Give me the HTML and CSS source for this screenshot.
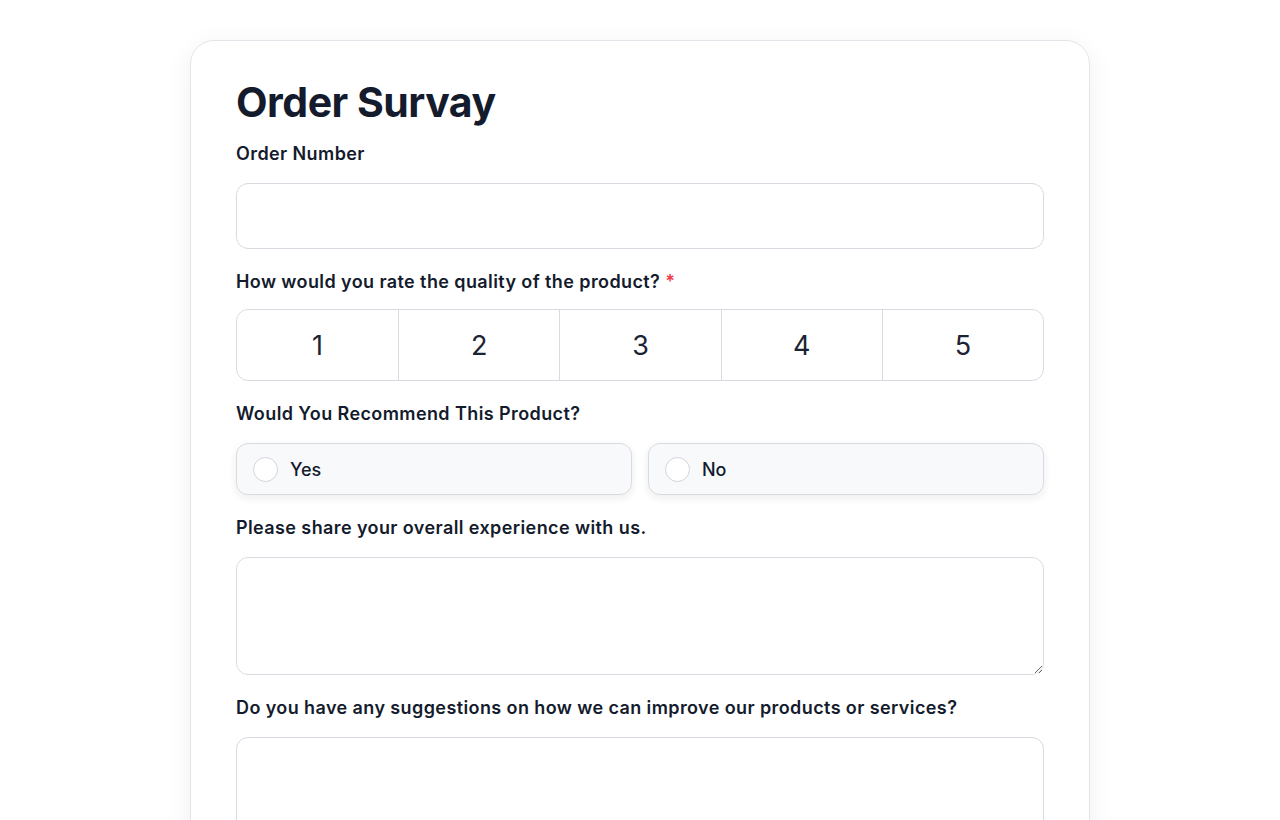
FILE: index.html
```html
<!DOCTYPE html>
<html>
  <head>
    <meta charset='UTF-8'>
    <meta name='viewport' content='width=device-width, initial-scale=1.0'>
    <title>Order Survay</title>
    <link rel="stylesheet" href="styles.css">
  </head>
  <body>
    <div class='page'>
      <form class='survey'>
        <h1 class='survey__title'>Order Survay</h1>

        <div class='field'>
          <label class='field__label' for='order-number'>Order Number</label>
          <input class='field__input' id='order-number' type='text'>
        </div>

        <div class='field'>
          <div class='field__label field__label--rating'>How would you rate the quality of the product? <span class='required'>*</span></div>
          <div class='rating'>
            <div class='rating__cell'>1</div>
            <div class='rating__cell'>2</div>
            <div class='rating__cell'>3</div>
            <div class='rating__cell'>4</div>
            <div class='rating__cell'>5</div>
          </div>
        </div>

        <div class='field'>
          <div class='field__label'>Would You Recommend This Product?</div>
          <div class='choices'>
            <label class='choice'>
              <span class='choice__radio'></span>
              <span class='choice__text'>Yes</span>
            </label>
            <label class='choice'>
              <span class='choice__radio'></span>
              <span class='choice__text'>No</span>
            </label>
          </div>
        </div>

        <div class='field'>
          <label class='field__label' for='experience'>Please share your overall experience with us.</label>
          <textarea class='field__textarea' id='experience'></textarea>
        </div>

        <div class='field'>
          <label class='field__label' for='suggestions'>Do you have any suggestions on how we can improve our products or services?</label>
          <textarea class='field__textarea' id='suggestions'></textarea>
        </div>
      </form>
    </div>
  </body>
</html>
```

FILE: styles.css
```css
html,
body {
	margin: 0;
}

body {
	background: #fff;
	font-family: Inter, 'Noto Sans', Arial, sans-serif;
	color: #141b2d;
}

.page {
	display: flex;
	justify-content: center;
	padding-top: 40px;
}

.survey {
	box-sizing: border-box;
	width: 900px;
	padding: 36px 45px 40px;
	background: #fff;
	border: 1px solid #e4e5ea;
	border-radius: 24px;
	box-shadow: 0 6px 28px rgba(20, 27, 45, 0.06);
}

  .survey__title {
  	margin: 0 0 14px;
  	font-size: 41px;
  	line-height: 50px;
  	font-weight: 700;
  	letter-spacing: -0.5px;
  }

  .field {
  	display: flex;
  	flex-direction: column;
  	margin-bottom: 20px;
  }

    .field__label {
    	display: block;
    	margin-bottom: 16px;
    	font-size: 18px;
    	line-height: 26px;
    	font-weight: 600;
    	letter-spacing: 0.4px;
    }

    .field__label--rating {
    	margin-bottom: 14px;
    }

    .required {
    	color: #ef3b4a;
    }

    .field__input,
    .field__textarea {
    	box-sizing: border-box;
    	width: 100%;
    	margin: 0;
    	border: 1px solid #d9dbe2;
    	border-radius: 12px;
    	background: #fff;
    	font-family: inherit;
    	font-size: 16px;
    	outline: none;
    }

    .field__input {
    	height: 66px;
    	padding: 0 16px;
    }

    .field__textarea {
    	display: block;
    	height: 118px;
    	padding: 12px 16px;
    	resize: vertical;
    }

  .rating {
  	box-sizing: border-box;
  	display: grid;
  	grid-template-columns: repeat(5, 1fr);
  	height: 72px;
  	border: 1px solid #d9dbe2;
  	border-radius: 12px;
  	overflow: hidden;
  }

    .rating__cell {
    	display: flex;
    	align-items: center;
    	justify-content: center;
    	font-size: 27px;
    	font-weight: 400;
    	color: #1c2333;
    	border-left: 1px solid #d9dbe2;
    }

    .rating__cell:first-child {
    	border-left: 0;
    }

  .choices {
  	display: grid;
  	grid-template-columns: 1fr 1fr;
  	gap: 16px;
  }

    .choice {
    	display: flex;
    	align-items: center;
    	gap: 12px;
    	height: 52px;
    	box-sizing: border-box;
    	padding: 0 16px;
    	background: #f8f9fb;
    	border: 1px solid #d9dbe2;
    	border-radius: 12px;
    	box-shadow: 0 3px 8px rgba(20, 27, 45, 0.08);
    }

      .choice__radio {
      	box-sizing: border-box;
      	width: 25px;
      	height: 25px;
      	border: 1px solid #d3d5dc;
      	border-radius: 50%;
      	background: #fff;
      }

      .choice__text {
      	font-size: 18px;
      	font-weight: 500;
      }
```
